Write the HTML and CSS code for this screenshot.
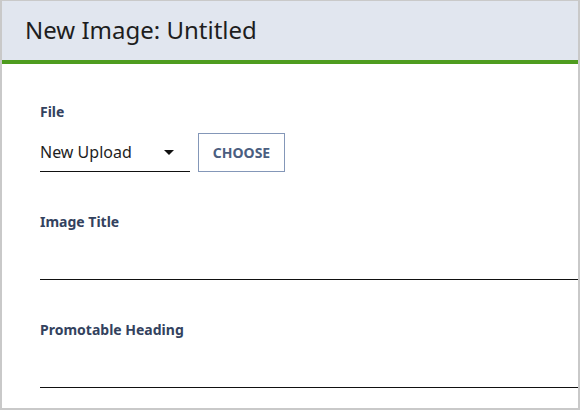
FILE: index.html
```html
<!DOCTYPE html>
<html>
<head>
<meta charset="utf-8">
<link rel="stylesheet" href="styles.css">
</head>
<body>
<div class="panel">
  <header class="head">
    <h1 class="title">New Image: Untitled</h1>
  </header>
  <div class="body">
    <div class="field">
      <label class="label">File</label>
      <div class="file-row">
        <div class="select">
          <span class="select-text">New Upload</span>
          <span class="caret"></span>
        </div>
        <button class="choose">CHOOSE</button>
      </div>
    </div>
    <div class="field">
      <label class="label">Image Title</label>
      <div class="input"></div>
    </div>
    <div class="field">
      <label class="label">Promotable Heading</label>
      <div class="input"></div>
    </div>
  </div>
</div>
</body>
</html>
```

FILE: styles.css
```css
* { box-sizing: border-box; }
html, body { margin: 0; padding: 0; }
body {
  width: 580px;
  height: 410px;
  overflow: hidden;
  background: #fff;
  font-family: "Noto Sans", "Open Sans", sans-serif;
}
.panel {
  width: 580px;
  height: 410px;
  border: 2px solid #c9c9c9;
  border-top-width: 1px;
  overflow: hidden;
}
.head {
  height: 63px;
  background: #e1e6ef;
  border-bottom: 4px solid #4e9c1f;
  padding-left: 23px;
  display: flex;
  align-items: center;
}
.title {
  margin: 0;
  font-weight: 400;
  font-size: 24px;
  color: #1e1e1e;
  padding-bottom: 3px;
}
.body {
  padding: 39px 0 0 38px;
}
.label {
  display: block;
  font-size: 14px;
  font-weight: 700;
  color: #33425e;
  line-height: 18px;
}
.file-row {
  display: flex;
  align-items: flex-end;
  margin-top: 12px;
  gap: 8px;
}
.select {
  width: 150px;
  height: 38px;
  border-bottom: 1.5px solid #111;
  display: flex;
  align-items: center;
  justify-content: space-between;
  padding-right: 16px;
}
.select-text {
  font-size: 16px;
  color: #1e1e1e;
  padding-bottom: 2px;
}
.caret {
  width: 0;
  height: 0;
  border-left: 5px solid transparent;
  border-right: 5px solid transparent;
  border-top: 5px solid #111;
}
.choose {
  width: 87px;
  height: 39px;
  background: #fff;
  border: 1px solid #8497b8;
  font-family: "Noto Sans", "Open Sans", sans-serif;
  font-size: 14px;
  font-weight: 700;
  color: #4b5e80;
  padding: 0;
}
.field + .field { margin-top: 41px; }
.input {
  height: 49px;
  margin-top: 0;
  border-bottom: 1.5px solid #111;
  margin-right: -4px;
}
```
